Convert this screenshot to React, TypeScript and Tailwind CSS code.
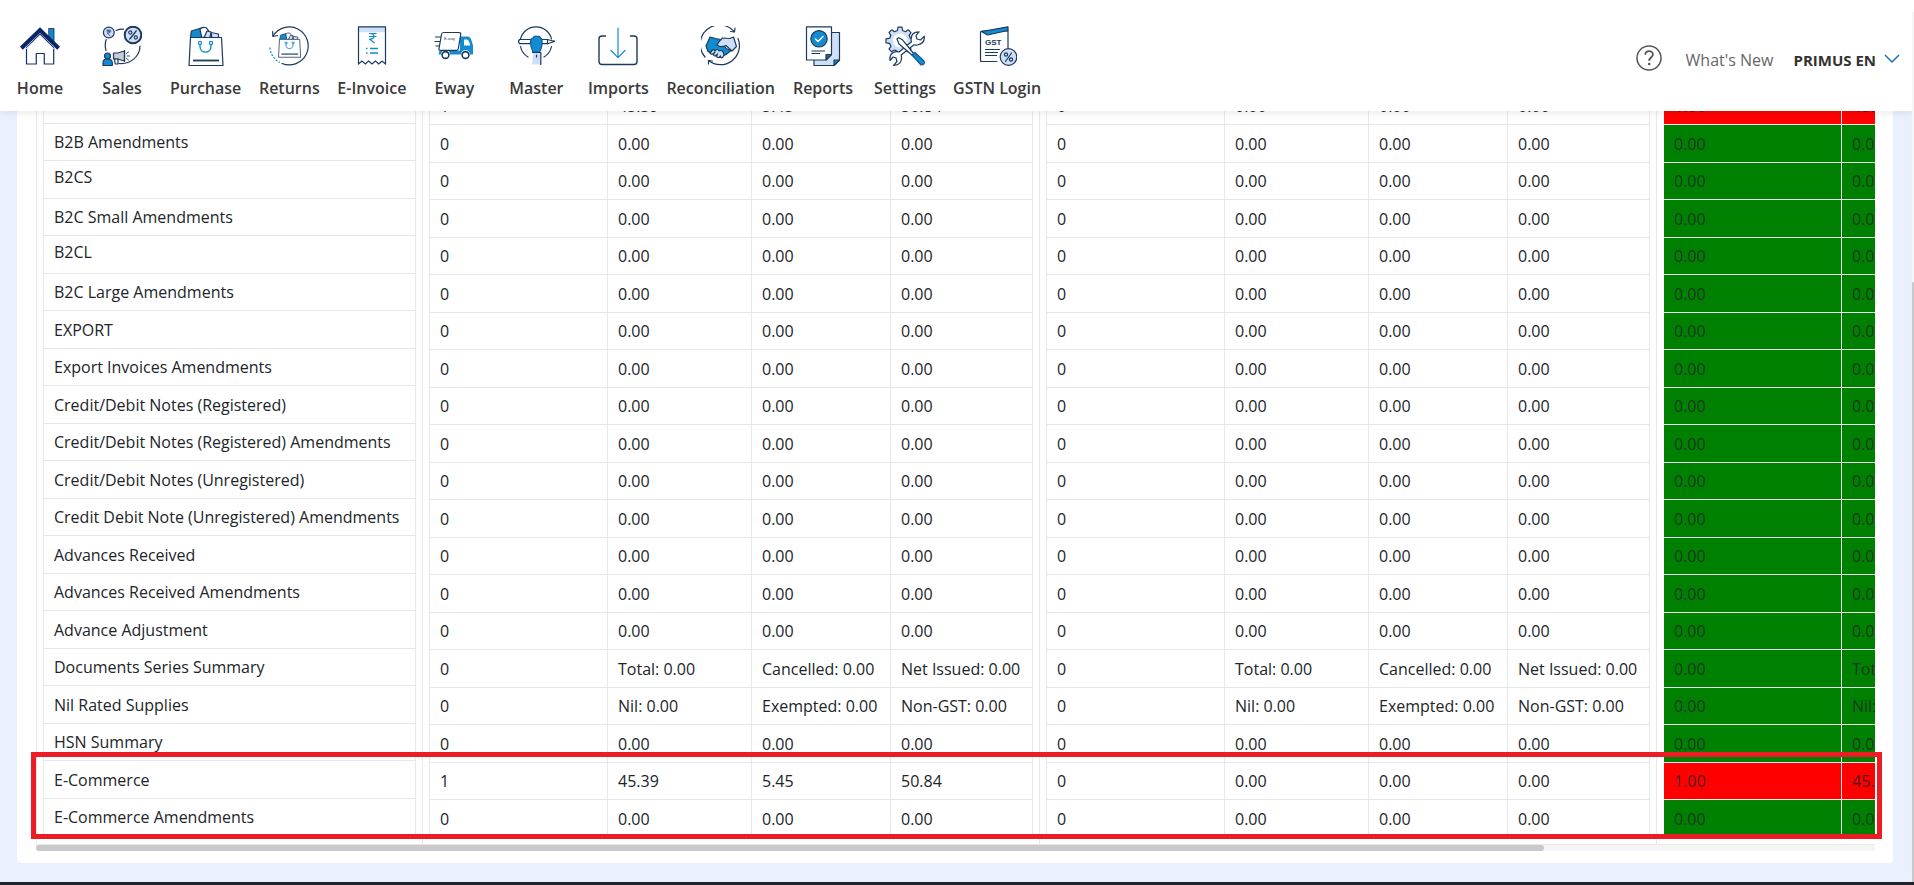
import type { ReactNode } from "react";

const NAVY = "#1d3a5c";
const BLUE = "#128bd0";
const PALE = "#cfdff8";

function Icon({ children }: { children: ReactNode }) {
  return (
    <svg
      viewBox="0 0 40 40"
      className="h-10 w-10"
      fill="none"
      stroke={NAVY}
      strokeWidth="1.2"
      strokeLinejoin="round"
      strokeLinecap="round"
      aria-hidden="true"
    >
      {children}
    </svg>
  );
}

const HomeIcon = () => (
  <Icon>
    <path d="M29 2.5h5v15l-5-5z" fill="#1c84c6" stroke="#0d2a66" strokeWidth=".8" />
    <path d="M6.5 22v16h9.8V27.5h8V38h9.4V22L20 8z" fill="#fff" stroke="#12336e" />
    <path d="M2.8 20.8 20 4l17.2 16.8" stroke="#0a2468" strokeWidth="4" strokeLinejoin="miter" strokeLinecap="square" />
    <path d="M6.5 22.5 20 9.5l13.5 13" stroke="#fff" strokeWidth=".9" />
  </Icon>
);

const SalesIcon = () => (
  <Icon>
    <path d="M14 4.5q3.500-1.500 7.500-1.300M4.200 13.500q-1.800 5-.2 11M38 20c0 10-9 18.500-21 17.500" />
    <circle cx="6.8" cy="6.5" r="5.4" fill={PALE} />
    <path d="M5 4.200h3.800M5 5.800h3.800M5.200 4.200c3.500 0 3.500 3 0 3l2.800 2.400" strokeWidth=".8" />
    <circle cx="31" cy="9" r="8.3" fill={PALE} strokeWidth="2" />
    <path d="m27.800 13 6.400-8" strokeWidth="1.3" />
    <circle cx="28.3" cy="6.5" r="1.6" strokeWidth="1.1" />
    <circle cx="33.8" cy="11.5" r="1.6" strokeWidth="1.1" />
    <circle cx="5.5" cy="30" r="3" fill={BLUE} />
    <path d="M1 39.500v-3q0-3.500 4.500-3.500t4.800 3.500v3z" fill={BLUE} />
    <path d="M11.500 27h4l7-2v10l-7-2h-4z" fill="#c9cdd3" />
    <path d="M12.500 33h3.500v5h-2.800zM22.500 24.500v11" fill="#fff" />
    <path d="m24.500 27.500 2-1.500M25 30h2.500M24.500 32.500l2 1.500" strokeWidth=".9" />
  </Icon>
);

const BagArt = () => (
  <>
    <path d="m4.500 12 .8-7 10-3 2 10z" fill={BLUE} />
    <path d="M14 3.500q2-3 6-1.800l4 4.800-8 6z" fill="#fff" />
    <path d="m18 12 3-7 4 1 1 6zM24 11l1-4.500 7.500 1.500V12z" fill={PALE} />
    <path d="M4.500 11.500h31l1.500 28H3z" fill="#fff" />
    <circle cx="14" cy="17" r="1.6" stroke={BLUE} />
    <circle cx="25" cy="17" r="1.6" stroke={BLUE} />
    <path d="M14 18.500v2c0 7.500 11 7.500 11 0v-2" stroke={BLUE} strokeWidth="1.4" />
    <path d="M7 34.500h26" strokeWidth="1.8" strokeLinecap="butt" />
  </>
);

const PurchaseIcon = () => (
  <Icon>
    <BagArt />
  </Icon>
);

const ReturnsIcon = () => (
  <Icon>
    <path d="M4 10A19 19 0 1 1 13 37.500" />
    <path d="M3.500 5.500 4 10.500l4.500-1" />
    <path d="M.8 21.500q1 10 10 15" stroke={BLUE} strokeDasharray="2 1.5" strokeLinecap="butt" />
    <g transform="translate(8 6) scale(.64)">
      <BagArt />
    </g>
  </Icon>
);

const InvoiceIcon = () => (
  <Icon>
    <path d="M6.500.800h27v5.500h-27z" fill={PALE} stroke="none" />
    <path d="M6.500 38V.800h27V38l-3.500-3-3.200 3-3.400-3-3.400 3-3.400-3-3.300 3-3.300-3z" strokeLinejoin="miter" />
    <path d="M17 7.500h7.500M17 10.500h7.500M17.500 7.500c6 0 6 5.500 0 5.500l5 4" stroke={BLUE} strokeLinecap="butt" />
    <path d="M14 22.500h1.500M18 22.500h8M14 27h1.500M18 27h8" stroke={BLUE} strokeWidth="1.5" strokeLinecap="butt" />
  </Icon>
);

const EwayIcon = () => (
  <Icon>
    <path d="M26 10.500h7.500q3 0 4 4l1.500 5v9h-3a4.500 4.500 0 0 0-9 0H16a4.500 4.500 0 0 0-9 0H4.500l1-4H26z" fill={BLUE} stroke="none" />
    <path d="M30 13.500h3q1.500 0 2.200 2.500l1 3.500h-6.200z" fill="#fff" stroke="none" />
    <path d="M9.500 6.500H25q2 0 1.700 2l-2.400 14q-.3 1.800-2 1.800H6.500q-1.800 0-1.500-1.800l2.500-14q.3-2 2-2z" fill="#fff" />
    <path d="M1.500 11h5M1 15.500h4.500M2 20h3" />
    <text x="10" y="13.5" fontSize="4" fill={NAVY} stroke="none" fontFamily="Liberation Sans, sans-serif">E-way</text>
    <circle cx="11.5" cy="29" r="3.4" fill="#fff" strokeWidth="1.6" />
    <circle cx="31.5" cy="29" r="3.4" fill="#fff" strokeWidth="1.6" />
  </Icon>
);

const MasterIcon = () => (
  <Icon>
    <path d="M4.500 13a16 16 0 0 1 31 0M4.500 20.500a16 16 0 0 0 7.500 10.500M35.500 20.500a16 16 0 0 1-7.500 10.500" />
    <path d="M3.500 13.500h28l7 2-7 2.200h-28q-2-2.100 0-4.200z" fill="#fff" />
    <path d="M31.500 13.500v4.200M37 15h1.500" />
    <path d="M14.500 16q0-4 2.500-4l1-1.500q2-1 3.500 0 2.500-.5 3 1.500 2 .5 1.500 4.500 0 6-2.500 9.500h-6.500q-2.500-5-2.500-10z" fill={BLUE} stroke="#155a91" />
    <path d="M17 26.500h7.500v12H16z" fill={PALE} stroke="none" />
    <path d="M24.800 26.500v12M16.500 26.500h8M20.500 29v2" />
  </Icon>
);

const ImportsIcon = () => (
  <Icon>
    <path d="M7.500 10H4q-3 0-3 3v22.500q0 3 3 3h32q3 0 3-3V13q0-3-3-3h-3.500" strokeWidth="1.4" />
    <path d="M20 2v29.500M13 24.500l7 7.200 7-7.200" stroke={BLUE} />
  </Icon>
);

const ReconciliationIcon = () => (
  <Icon>
    <path d="M4 31A19 19 0 0 1 33 5.500M37 12.500A19 19 0 0 1 7.500 34.500" />
    <path d="m29.500 5.500 4 .5.500-4M7.500 38v-3.500l4 .5" />
    <path d="m5 20 4-9 5.500 1.500 5 1 5.500 9 5 2-5 4-7 3-11-6z" fill={BLUE} />
    <path d="M16 19q2-4 5.500-7l7.500.5 3.500-1.500 3 9.500-4.500 4.500-6-5.500q-5 2.500-9-.5z" fill={PALE} />
    <path d="m11.500 24-2.500 3q1 2 3.500.5l1.500-1.500q-3 4 .5 4l2-2q-2 4 1.500 3.500l1.500-1.500q0 3 2.500 1l1-2q-1-6-5-4-2-3-4 0-1-2-2.500-1z" fill={PALE} />
  </Icon>
);

const ReportsIcon = () => (
  <Icon>
    <path d="M11 6.500h25.500V34L31 39.500H11z" fill={PALE} />
    <path d="M36.500 34H31v5.500z" fill={BLUE} />
    <path d="M3.500.800h25V28.500L23 34H3.500z" fill="#fff" />
    <path d="M28.500 28.500H23V34z" fill="#46647f" />
    <circle cx="16" cy="12.8" r="8.2" fill={BLUE} />
    <path d="m12.500 13 2.500 2.500 5-5" stroke="#fff" strokeWidth="1.5" />
    <path d="M8.500 25H22M8.500 27.500H17" strokeLinecap="butt" />
  </Icon>
);

const SettingsIcon = () => (
  <Icon>
    <path
      d="m13 1 4 .2.6 3.300 2.900 1.200 2.800-1.900 2.700 2.800-1.900 2.800 1.200 2.900 3.200.6v4l-3.200.6-1.200 2.900 1.900 2.800-2.800 2.700-2.800-1.900-2.900 1.200-.6 3.300h-4l-.6-3.300-2.900-1.200L6.700 25.800 4 23.100l1.900-2.800-1.200-2.900L1 16.800v-4l3.700-.6 1.200-2.900L4 6.500l2.700-2.700 2.800 1.900 2.900-1.200z"
      fill={PALE}
    />
    <circle cx="15" cy="14.5" r="7" fill="#fff" stroke="none" />
    <path
      d="M34 5.800q-8 0-8 7.700 0 1.300.5 2.300L14 26q-1.500-.6-3-.3Q4 27 5 34.500l3-3.500 3 1 1 3.500-3.500 3.800q8.500-.5 8-8 0-1.300-.3-2.300L29 18.800q1.500.6 3.500.2 7.500-1.500 6.800-8.800L35.500 14l-3.500-1-1-3.300z"
      fill="#fff"
    />
    <path d="m12 13 1.500-1.200 4 2L29 28l-1.500 1.500L14 18z" fill="#fff" />
    <path d="m27 29 3-2.500 9 8.500q1.500 4-3 4z" fill={BLUE} stroke="#155a91" />
  </Icon>
);

const GstnIcon = () => (
  <Icon>
    <path d="M5 35.500q-1.500 0-1.500-1.500V7q0-2 2-2H31V32M3.500 35.500H20" />
    <path d="M4.500 5.500 31 .800v3.700L10.500 9z" fill={BLUE} />
    <text x="8" y="19" fontSize="8" fontWeight="bold" fill={NAVY} stroke="none" fontFamily="Liberation Sans, sans-serif">GST</text>
    <path d="M8.500 23.500h14M8.500 26.500h12M8.500 29.500h11" />
    <circle cx="31.5" cy="31" r="8.3" fill={PALE} />
    <path d="m28.500 35.500 6-8.500" />
    <circle cx="29" cy="28.5" r="1.6" />
    <circle cx="34" cy="33.5" r="1.6" />
  </Icon>
);

const NAV = [
  { label: "Home", icon: <HomeIcon /> },
  { label: "Sales", icon: <SalesIcon /> },
  { label: "Purchase", icon: <PurchaseIcon /> },
  { label: "Returns", icon: <ReturnsIcon /> },
  { label: "E-Invoice", icon: <InvoiceIcon /> },
  { label: "Eway", icon: <EwayIcon /> },
  { label: "Master", icon: <MasterIcon /> },
  { label: "Imports", icon: <ImportsIcon /> },
  { label: "Reconciliation", icon: <ReconciliationIcon /> },
  { label: "Reports", icon: <ReportsIcon /> },
  { label: "Settings", icon: <SettingsIcon /> },
  { label: "GSTN Login", icon: <GstnIcon /> },
];

type Row = {
  name: string;
  raised?: boolean;
  books: string[];
  portal: string[];
  diff: string[];
  mismatch?: boolean;
};

const ZERO = ["0", "0.00", "0.00", "0.00"];
const ZERO_DIFF = ["0.00", "0.00"];
const BILLED = ["1", "45.39", "5.45", "50.84"];

const zeroRow = (name: string, raised = false): Row => ({
  name,
  raised,
  books: ZERO,
  portal: ZERO,
  diff: ZERO_DIFF,
});

const DOCS = ["0", "Total: 0.00", "Cancelled: 0.00", "Net Issued: 0.00"];
const NIL = ["0", "Nil: 0.00", "Exempted: 0.00", "Non-GST: 0.00"];

const ROWS: Row[] = [
  { name: "B2B, Deemed Invoices, SEZ", raised: true, books: BILLED, portal: ZERO, diff: ["1.00", "45.39"], mismatch: true },
  zeroRow("B2B Amendments"),
  zeroRow("B2CS", true),
  zeroRow("B2C Small Amendments"),
  zeroRow("B2CL", true),
  zeroRow("B2C Large Amendments"),
  zeroRow("EXPORT"),
  zeroRow("Export Invoices Amendments"),
  zeroRow("Credit/Debit Notes (Registered)"),
  zeroRow("Credit/Debit Notes (Registered) Amendments"),
  zeroRow("Credit/Debit Notes (Unregistered)"),
  zeroRow("Credit Debit Note (Unregistered) Amendments"),
  zeroRow("Advances Received"),
  zeroRow("Advances Received Amendments"),
  zeroRow("Advance Adjustment"),
  { name: "Documents Series Summary", books: DOCS, portal: DOCS, diff: ["0.00", "Total: 0.00"] },
  { name: "Nil Rated Supplies", books: NIL, portal: NIL, diff: ["0.00", "Nil: 0.00"] },
  zeroRow("HSN Summary"),
  { name: "E-Commerce", books: BILLED, portal: ZERO, diff: ["1.00", "45.39"], mismatch: true },
  zeroRow("E-Commerce Amendments"),
];

function AmountTable({ label, rows }: { label: string; rows: string[][] }) {
  return (
    <table aria-label={label} className="w-[604px] table-fixed border-separate border-spacing-0 border-l border-[#e6e8ea]">
      <colgroup>
        <col className="w-[178px]" />
        <col className="w-[144px]" />
        <col className="w-[139px]" />
        <col className="w-[142px]" />
      </colgroup>
      <tbody>
        {rows.map((cells, i) => (
          <tr key={i} className="odd:h-[37px] even:h-[38px]">
            {cells.map((cell, j) => (
              <td key={j} className="whitespace-nowrap border-b border-r border-[#e6e8ea] pl-2.5">
                {cell}
              </td>
            ))}
          </tr>
        ))}
      </tbody>
    </table>
  );
}

function Header() {
  return (
    <header className="relative z-20 flex h-[111px] shrink-0 items-start justify-between bg-white pt-6 shadow-[0_2px_8px_rgba(0,0,0,0.08)]">
      <nav className="-ml-px flex">
        {NAV.map((item) => (
          <a key={item.label} href="#" className="flex min-w-[82px] flex-col items-center gap-3 px-[7px] pt-0.5">
            {item.icon}
            <span className="whitespace-nowrap text-base leading-5 font-semibold text-[#3a3a3a]">{item.label}</span>
          </a>
        ))}
      </nav>
      <div className="flex items-center gap-6 pt-6 pr-3.5">
        <a href="#" aria-label="Help" className="-mt-1">
          <svg viewBox="0 0 26 26" className="h-[26px] w-[26px]" fill="none" stroke="#555" strokeWidth="1.5">
            <circle cx="13" cy="13" r="12" />
            <path d="M9.300 9.700c0-5 7.600-4.700 7.600-.3 0 3-3.700 2.800-3.700 6.400" strokeWidth="1.8" />
            <circle cx="13.2" cy="19" r="1.3" fill="#555" stroke="none" />
          </svg>
        </a>
        <a href="#" className="text-base leading-6 text-[#666]">What&apos;s New</a>
        <button type="button" className="-ml-1 flex items-center gap-2 text-[15px] leading-6 font-bold text-[#333]">
          <span className="whitespace-nowrap">PRIMUS EN</span>
          <svg viewBox="0 0 16 9" className="-mt-1 h-[9px] w-4" fill="none" stroke="#1b75bc" strokeWidth="1.5" aria-hidden="true">
            <path d="m1 1 7 7 7-7" />
          </svg>
        </button>
      </div>
    </header>
  );
}

export default function App() {
  return (
    <div className="relative flex min-h-screen flex-col overflow-hidden bg-[#eaf0fd] font-['Open_Sans',sans-serif] text-base leading-6 text-[#212529]">
      <Header />

      <main className="grow overflow-hidden pr-[21px] pb-[19px] pl-[17px]">
        <div className="rounded-b bg-white pr-[18px] pb-3 pl-[19px]">
          {/* Horizontally scrolling comparison */}
          <div className="relative">
            <div className="-mt-[25px] flex overflow-hidden border-b border-l border-[#e6e8ea]">
              {/* Section names */}
              <div className="shrink-0 border-r border-[#e6e8ea] px-1.5 pb-2">
                <table aria-label="Sections" className="w-[373px] border-separate border-spacing-0 border-l border-[#e6e8ea]">
                  <tbody>
                    {ROWS.map((row) => (
                      <tr key={row.name} className="odd:h-[38px] even:h-[37px]">
                        <td
                          className={
                            row.raised
                              ? "whitespace-nowrap border-b border-r border-[#e6e8ea] pb-1.5 pl-2.5"
                              : "whitespace-nowrap border-b border-r border-[#e6e8ea] pl-2.5"
                          }
                        >
                          {row.name}
                        </td>
                      </tr>
                    ))}
                  </tbody>
                </table>
              </div>

              <div className="shrink-0 border-r border-[#e6e8ea] px-1.5 pt-0.5">
                <AmountTable label="Books" rows={ROWS.map((row) => row.books)} />
              </div>
              <div className="shrink-0 border-r border-[#e6e8ea] px-1.5 pt-0.5">
                <AmountTable label="Portal" rows={ROWS.map((row) => row.portal)} />
              </div>

              {/* Differences */}
              <div className="shrink-0 pt-0.5 pl-[7px]">
                <table aria-label="Difference" className="w-[322px] table-fixed border-separate border-spacing-0">
                  <colgroup>
                    <col className="w-[178px]" />
                    <col className="w-[144px]" />
                  </colgroup>
                  <tbody>
                    {ROWS.map((row) => (
                      <tr key={row.name} className={row.mismatch ? "bg-[#ff0000] odd:h-[37px] even:h-[38px]" : "bg-[#008000] odd:h-[37px] even:h-[38px]"}>
                        {row.diff.map((cell, j) => (
                          <td key={j} className="whitespace-nowrap border-b border-r border-[#e6e8ea] pl-2.5 text-[#212529]/80">
                            {cell}
                          </td>
                        ))}
                      </tr>
                    ))}
                  </tbody>
                </table>
              </div>
            </div>

            {/* Highlight around the e-commerce rows */}
            <div className="pointer-events-none absolute -right-[7px] bottom-1.5 -left-[5px] h-[87px] border-[5px] border-[#eb1c24]" />
          </div>

          {/* Horizontal scroll track */}
          <div className="h-1.5 bg-[#f5f5f5]">
            <div className="h-full w-[82%] rounded-full bg-[#c9c9c9]" />
          </div>
        </div>
      </main>

      <div className="h-[3px] bg-[#22222a]" />

      {/* Page scroll thumb */}
      <div className="absolute top-3 right-0 bottom-[3px] z-30 flex w-0.5 flex-col justify-end bg-[#f5f5f5]">
        <div className="h-[69%] rounded-t bg-[#c9c9c9]" />
      </div>
    </div>
  );
}
